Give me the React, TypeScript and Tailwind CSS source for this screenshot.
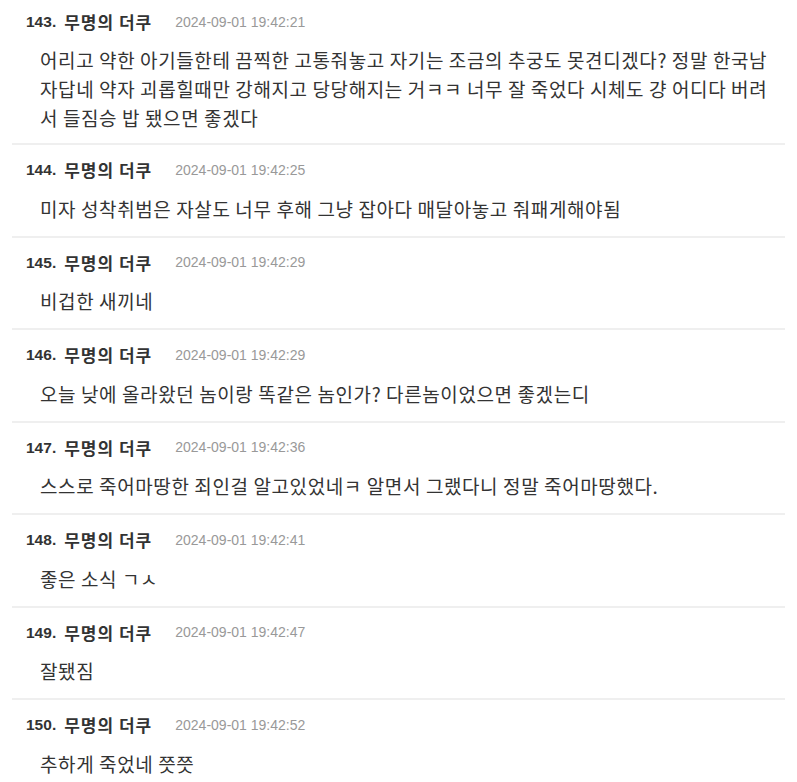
const comments = [
  {
    no: 143,
    date: "2024-09-01 19:42:21",
    text: "어리고 약한 아기들한테 끔찍한 고통줘놓고 자기는 조금의 추궁도 못견디겠다? 정말 한국남자답네 약자 괴롭힐때만 강해지고 당당해지는 거ㅋㅋ 너무 잘 죽었다 시체도 걍 어디다 버려서 들짐승 밥 됐으면 좋겠다",
  },
  {
    no: 144,
    date: "2024-09-01 19:42:25",
    text: "미자 성착취범은 자살도 너무 후해 그냥 잡아다 매달아놓고 줘패게해야됨",
  },
  { no: 145, date: "2024-09-01 19:42:29", text: "비겁한 새끼네" },
  {
    no: 146,
    date: "2024-09-01 19:42:29",
    text: "오늘 낮에 올라왔던 놈이랑 똑같은 놈인가? 다른놈이었으면 좋겠는디",
  },
  {
    no: 147,
    date: "2024-09-01 19:42:36",
    text: "스스로 죽어마땅한 죄인걸 알고있었네ㅋ 알면서 그랬다니 정말 죽어마땅했다.",
  },
  { no: 148, date: "2024-09-01 19:42:41", text: "좋은 소식 ㄱㅅ" },
  { no: 149, date: "2024-09-01 19:42:47", text: "잘됐짐" },
  { no: 150, date: "2024-09-01 19:42:52", text: "추하게 죽었네 쯧쯧" },
];

export default function App() {
  return (
    <div className="min-h-screen bg-white px-3 font-['Liberation_Sans','Noto_Sans_CJK_KR',sans-serif]">
      {comments.map((c, i) => (
        <div
          key={c.no}
          className={
            (i === 0 ? "pt-[10px] pb-[11px] " : "pt-[13px] pb-[13px] ") +
            (i < comments.length - 1 ? "border-b-2 border-[#efefef] " : "") +
            "px-[14px]"
          }
        >
          <div className="flex h-6 items-center gap-[23px]">
            <span className="flex items-center text-[15.5px] font-bold text-[#333]">
              {c.no}.
              <span className="ml-[8px] font-['Noto_Sans_CJK_KR',sans-serif] text-[17px] tracking-[1px]">
                무명의 더쿠
              </span>
            </span>
            <span className="text-[14px] text-[#999]">{c.date}</span>
          </div>
          <p
            className={
              (i === 0 ? "mt-[11px] " : "mt-[11.5px] ") +
              "break-all pl-[14px] font-['Noto_Sans_CJK_KR',sans-serif] text-[19px] leading-[29px] tracking-[0.6px] text-[#333]"
            }
          >
            {c.text}
          </p>
        </div>
      ))}
    </div>
  );
}
